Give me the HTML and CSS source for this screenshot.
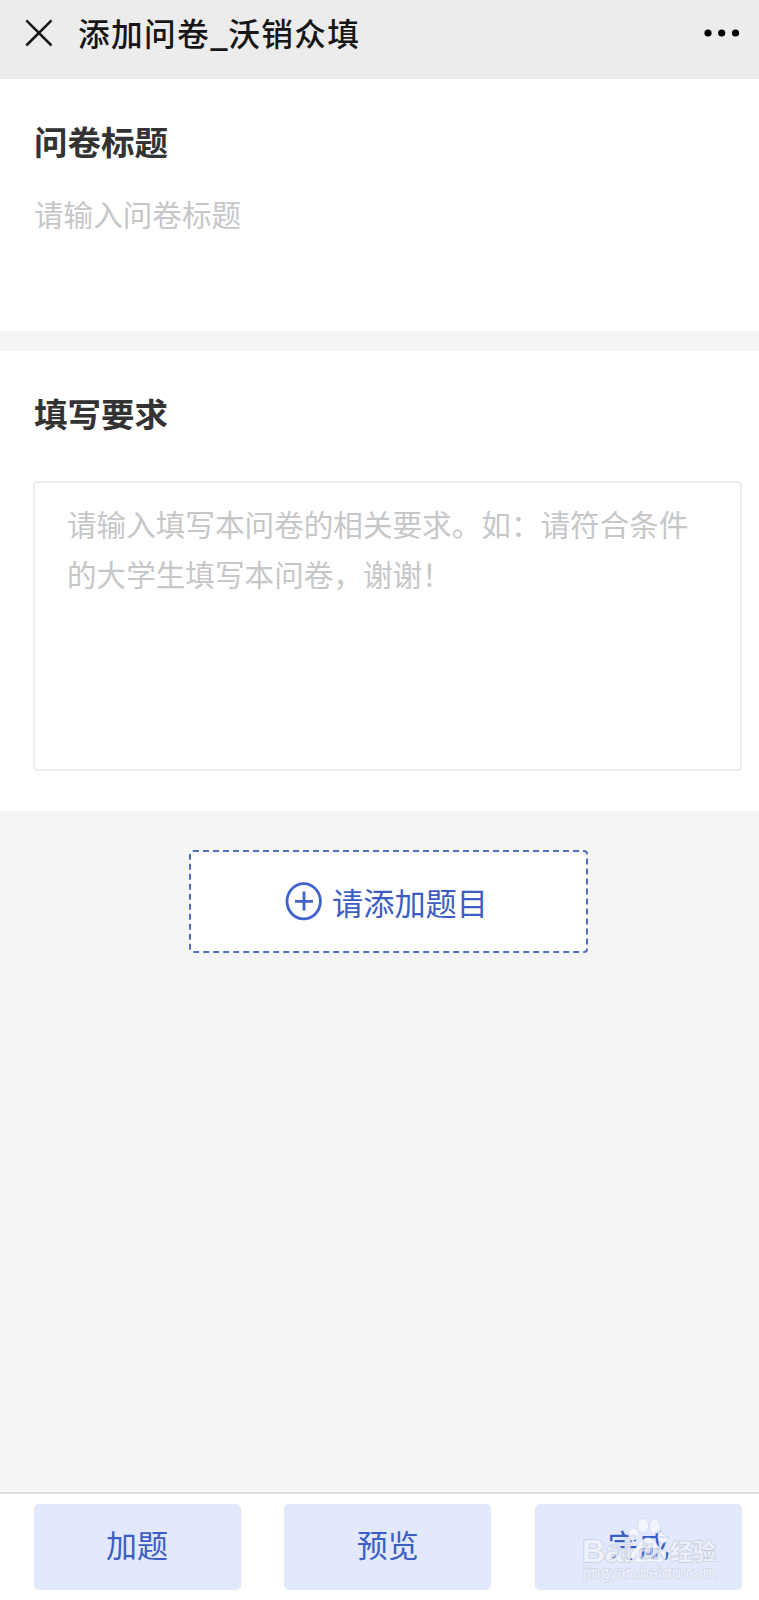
FILE: index.html
```html
<!DOCTYPE html>
<html lang="zh-CN">
<head>
<meta charset="utf-8">
<title>添加问卷_沃销众填</title>
<link rel="stylesheet" href="styles.css">
</head>
<body>
<header class="topbar">
  <svg class="close" width="28" height="28" viewBox="0 0 28 28"><path d="M1.3 1.3 26.500 26.500M26.500 1.3 1.3 26.500"/></svg>
  <h1 class="topbar-title">添加问卷<span class="underscore">_</span>沃销众填</h1>
  <svg class="more" width="36" height="8" viewBox="0 0 36 8"><circle cx="4" cy="4" r="3.6"/><circle cx="17.7" cy="4" r="3.6"/><circle cx="31.5" cy="4" r="3.6"/></svg>
</header>
<main class="content">
  <section class="card card-title">
    <h2 class="heading">问卷标题</h2>
    <div class="placeholder">请输入问卷标题</div>
  </section>
  <section class="card card-require">
    <h2 class="heading">填写要求</h2>
    <div class="textbox placeholder">请输入填写本问卷的相关要求。如：请符合条件<br>的大学生填写本问卷，谢谢！</div>
  </section>
  <button class="add">
    <svg class="plus" width="38" height="40" viewBox="0 0 38 40"><ellipse cx="18.7" cy="19.3" rx="16.7" ry="17.6"/><path d="M10 19.300h18M19 9.500v19"/></svg>
    <span>请添加题目</span>
  </button>
</main>
<footer class="actions">
  <button class="action">加题</button>
  <button class="action">预览</button>
  <button class="action">完成
    <svg class="watermark" width="146" height="70" viewBox="0 0 146 70">
      <g class="mark">
        <ellipse cx="54.500" cy="20" rx="5" ry="6"/>
        <ellipse cx="64" cy="11.500" rx="5.200" ry="7"/>
        <ellipse cx="76" cy="12.500" rx="5.200" ry="7"/>
        <ellipse cx="84" cy="23" rx="5" ry="6"/>
        <path fill-rule="evenodd" d="M69 24c-6 0-8 6-12 10-7 5-7 13 2 14 4 .5 7-1 11-1s7 1.500 11 1c8-1 7-9 1-13-5-4-7-11-13-11zM61 34h18v11H61z"/>
      </g>
      <text class="brand" x="3" y="48" textLength="50" lengthAdjust="spacingAndGlyphs">Bai</text>
      <text class="brand du" x="59" y="45" textLength="21">du</text>
      <text class="brand cn" x="91" y="46" textLength="46">经验</text>
      <text class="site" x="4" y="64" textLength="134" lengthAdjust="spacingAndGlyphs">jingyan.baidu.com</text>
    </svg>
  </button>
</footer>
</body>
</html>
```
FILE: styles.css
```css
* { box-sizing: border-box; }
body {
  margin: 0;
  height: 1600px;
  display: flex;
  flex-direction: column;
  background: #f5f5f5;
  font-family: "Noto Sans CJK SC", sans-serif;
  overflow: hidden;
}
h1, h2 { margin: 0; }
button { border: 0; padding: 0; font-family: inherit; color: #3c5ec4; }
.topbar {
  height: 79px;
  flex: none;
  display: flex;
  align-items: center;
  padding: 0 19px 14px 25px;
  background: #ececec;
}
.close { fill: none; stroke: #161616; stroke-width: 2.5; }
.topbar-title {
  flex: 1;
  margin-left: 25px;
  padding-bottom: 1px;
  font-size: 31.7px;
  line-height: 44px;
  font-weight: 500;
  letter-spacing: 1.3px;
  color: #161616;
}
.underscore { display: inline-block; width: 18.300px; font-weight: 700; }
.more { fill: #000; }
.content {
  flex: 1;
  display: flex;
  flex-direction: column;
  align-items: center;
}
.card { width: 100%; background: #fff; padding: 0 17px 0 34px; }
.card-title { height: 252px; padding-top: 38px; }
.card-require { height: 460px; margin-top: 20px; padding-top: 38px; }
.heading {
  font-size: 33.500px;
  line-height: 48px;
  font-weight: 700;
  color: #333;
}
.placeholder { font-size: 29.6px; line-height: 49.5px; font-weight: 400; color: #c6c7c9; }
.card-title .placeholder { margin-top: 24px; }
.textbox {
  width: 709px;
  height: 290px;
  margin: 44px 0 0 -1px;
  padding: 16px 0 0 32px;
  border: 2px solid #efefef;
  border-radius: 4px;
  white-space: nowrap;
}
.add {
  width: 399px;
  height: 103px;
  margin: 39px 0 0 18px;
  display: flex;
  align-items: center;
  padding-left: 94px;
  gap: 9px;
  border: 2px dashed #5470bd;
  border-radius: 4px;
  background: #fff;
  font-size: 31.2px;
  line-height: 44px;
}
.plus { fill: none; stroke: #3f62cc; stroke-width: 2.8; }
.actions {
  flex: none;
  height: 108px;
  display: flex;
  gap: 43.500px;
  padding: 10px 17px 10px 33.500px;
  border-top: 2px solid #dedede;
  background: #fff;
}
.action {
  position: relative;
  flex: 1;
  padding-bottom: 7px;
  border-radius: 5px;
  background: #e2e9fc;
  font-size: 31px;
  line-height: 44px;
}
.watermark { position: absolute; left: 44px; top: 10px; }
.mark, .brand, .site { fill: #f5f7fd; stroke: #c8cedf; stroke-width: 0.8; paint-order: stroke; }
.mark { fill-opacity: 0.85; }
.brand { font-family: "Liberation Sans", sans-serif; font-size: 31px; font-weight: 700; stroke-width: 1.4; fill-opacity: 0.8; }
.du { font-size: 18px; fill-opacity: 0.3; stroke-width: 0.8; }
.cn { font-family: "Noto Sans CJK SC", sans-serif; font-size: 23px; }
.site { font-family: "Open Sans", sans-serif; font-size: 15.500px; stroke-width: 1.2; }
```
